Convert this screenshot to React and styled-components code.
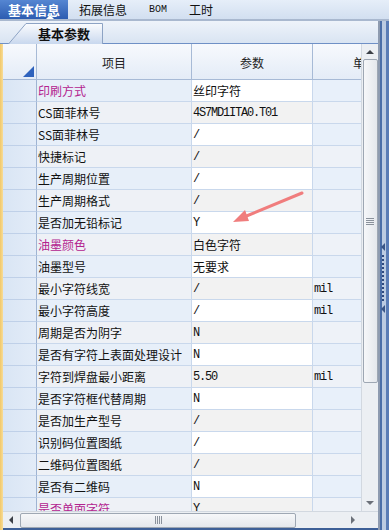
import React from "react";
import styled, { createGlobalStyle } from "styled-components";

const Global = createGlobalStyle`
  html, body { margin: 0; padding: 0; }
  body {
    width: 389px;
    height: 530px;
    overflow: hidden;
    background: #d6e1f0;
    font-family: "Noto Sans CJK SC", "Liberation Sans", sans-serif;
    font-size: 12px;
  }
`;

const Page = styled.div`
  width: 389px;
  height: 530px;
  display: flex;
  flex-direction: column;
`;

const TopTabs = styled.div`
  height: 19px;
  display: flex;
  align-items: center;
  background: linear-gradient(#e6eef9, #d2dff0);
  border-bottom: 2px solid #a9b8cf;
`;

const TopTab = styled.div`
  position: relative;
  height: 19px;
  display: flex;
  align-items: center;
  padding: ${p => (p.active ? "0 8px" : "0 11px")};
  font-weight: ${p => (p.active ? "bold" : "normal")};
  color: ${p => (p.active ? "#fff" : "#111")};
  background: ${p => (p.active ? "linear-gradient(#5586d2, #2c5cb1)" : "transparent")};
  font-family: ${p => (p.latin ? '"Liberation Mono", monospace' : "inherit")};
  font-size: ${p => (p.latin ? "10px" : p.active ? "13px" : "12px")};
  line-height: 19px;

  ${p =>
    p.active &&
    `&::after {
      content: "";
      position: absolute;
      left: 46px;
      bottom: 0;
      border-left: 4px solid transparent;
      border-right: 4px solid transparent;
      border-bottom: 4px solid #fff;
    }`}
`;

const Body = styled.div`
  flex: 1;
  display: flex;
  min-height: 0;
`;

const Left = styled.div`
  flex: 1;
  display: flex;
  flex-direction: column;
  min-width: 0;
`;

const SubTabBar = styled.div`
  height: 22px;
  display: flex;
  align-items: flex-end;
  padding-left: 8px;
  background: linear-gradient(#eef3fa, #d9e4f2);
  border-bottom: 1px solid #6f90c6;
`;

const SubTab = styled.div`
  position: relative;
  width: 95px;
  height: 20px;
  display: flex;
  align-items: center;
  padding-left: 30px;
  box-sizing: border-box;
  font-size: 13px;
  font-weight: bold;
  color: #111;

  svg { position: absolute; left: 0; top: 0; }
  span { position: relative; }
`;

const GridWrap = styled.div`
  flex: 1;
  display: flex;
  min-height: 0;
`;

const LeftStrip = styled.div`
  width: 3px;
  background: linear-gradient(90deg, #f2c86a, #f7dc97);
`;

const GridFrame = styled.div`
  flex: 1;
  display: flex;
  flex-direction: column;
  min-width: 0;
  border-bottom: 2px solid #3d5f97;
`;

const GridMain = styled.div`
  flex: 1;
  display: flex;
  min-height: 0;
`;

const Table = styled.div`
  width: 358px;
  overflow: hidden;
  background: #fff;
`;

const Row = styled.div`
  display: flex;
  height: 22px;
  width: 380px;
`;

const HeaderRow = styled(Row)`
  height: 36px;
  background: linear-gradient(#f7f9fd, #e4ecf7);
  border-bottom: 1px solid #a7bad6;
  box-sizing: border-box;
`;

const Corner = styled.div`
  position: relative;
  width: 34px;
  flex-shrink: 0;
  border-right: 1px solid #a7bad6;
  box-sizing: border-box;

  &::after {
    content: "";
    position: absolute;
    right: 2px;
    bottom: 2px;
    border-left: 11px solid transparent;
    border-bottom: 11px solid #2f63bd;
  }
`;

const HeadCell = styled.div`
  width: ${p => p.w}px;
  flex-shrink: 0;
  display: flex;
  align-items: center;
  justify-content: ${p => (p.start ? "flex-start" : "center")};
  padding-left: ${p => (p.start ? "40px" : "0")};
  border-right: 1px solid #a7bad6;
  box-sizing: border-box;
  color: #222;
  padding-top: 2px;
`;

const Indicator = styled.div`
  width: 34px;
  flex-shrink: 0;
  background: linear-gradient(90deg, #d9e5f4, #e3ecf8);
  border-right: 1px solid #9fb4d3;
  border-bottom: 1px solid #bfd0e8;
  box-sizing: border-box;
`;

const Cell = styled.div`
  width: ${p => p.w}px;
  flex-shrink: 0;
  display: flex;
  align-items: center;
  padding-left: 1px;
  box-sizing: border-box;
  border-right: 1px solid #c9d8ec;
  border-bottom: 1px solid #c9d8ec;
  white-space: nowrap;
  overflow: hidden;
  background: ${p => p.bg};
  color: ${p => (p.accent ? "#b3238f" : "#111")};
  font-family: ${p =>
    p.mono
      ? '"Liberation Mono", "Noto Sans CJK SC", monospace'
      : '"Noto Sans CJK SC", "Liberation Sans", sans-serif'};
  letter-spacing: ${p => (p.mono ? "-1.2px" : "0")};
  font-size: 12px;
  line-height: 14px;
`;

const VScroll = styled.div`
  width: 17px;
  display: flex;
  flex-direction: column;
  align-items: center;
  background: #eceff3;
  border-left: 1px solid #d2d8e0;
  padding-top: 4px;
  box-sizing: border-box;
`;

const Arrow = styled.div`
  width: 0;
  height: 0;
  margin: ${p => p.m};
  border-left: 4px solid transparent;
  border-right: 4px solid transparent;
  ${p => (p.down ? "border-top: 4px solid #6b7079;" : "border-bottom: 4px solid #3c4047;")}
`;

const VThumb = styled.div`
  width: 13px;
  height: 322px;
  margin-top: 5px;
  border: 1px solid #9ea7b3;
  border-radius: 2px;
  background: linear-gradient(90deg, #f6f7f9, #e4e7ec);
  display: flex;
  align-items: center;
  justify-content: center;
  flex-direction: column;
  gap: 1px;

  i { display: block; width: 8px; height: 1px; background: #8a919b; }
`;

const Spacer = styled.div`
  flex: 1;
`;

const HScrollRow = styled.div`
  height: 16px;
  display: flex;
  background: #eceff3;
  border-top: 1px solid #d2d8e0;
`;

const HTrack = styled.div`
  width: 358px;
  display: flex;
  align-items: center;
`;

const SideArrow = styled.div`
  width: 0;
  height: 0;
  margin: ${p => p.m};
  border-top: 4px solid transparent;
  border-bottom: 4px solid transparent;
  ${p => (p.right ? "border-left: 4px solid #6b7079;" : "border-right: 4px solid #3c4047;")}
`;

const HThumb = styled.div`
  width: 274px;
  height: 13px;
  border: 1px solid #9ea7b3;
  border-radius: 2px;
  background: linear-gradient(#f6f7f9, #e4e7ec);
  display: flex;
  align-items: center;
  justify-content: center;
  gap: 1px;

  i { display: block; width: 1px; height: 8px; background: #8a919b; }
`;

const ScrollCorner = styled.div`
  flex: 1;
  background: #eceff3;
`;

const Splitter = styled.div`
  width: 11px;
  display: flex;
  flex-direction: column;
  align-items: center;
  background: linear-gradient(90deg, #8e9bb0 0, #8e9bb0 2px, #4b6ea8 2px, #4b6ea8 4px, #bccbe2 4px, #bccbe2 8px, #5a7cb6 8px);
  padding-top: 222px;
  box-sizing: border-box;
`;

const Grip = styled.div`
  width: 0;
  height: 0;
  margin-left: -1px;
  border-top: 4px solid transparent;
  border-bottom: 4px solid transparent;
  border-right: 4px solid #3b5688;
`;

const Dots = styled.div`
  width: 2px;
  height: 46px;
  margin: 4px 0 4px -1px;
  background: repeating-linear-gradient(#2f4a80 0, #2f4a80 2px, transparent 2px, transparent 4px);
`;

const Annotation = styled.svg`
  position: absolute;
  left: 0;
  top: 0;
  pointer-events: none;
`;

const Stage = styled.div`
  position: relative;
`;

const rows = [
  ["印刷方式", "丝印字符", "", true, false],
  ["CS面菲林号", "4S7MD1ITA0.T01", "", false, true],
  ["SS面菲林号", "/", "", false, true],
  ["快捷标记", "/", "", false, true],
  ["生产周期位置", "/", "", false, true],
  ["生产周期格式", "/", "", false, true],
  ["是否加无铅标记", "Y", "", false, true],
  ["油墨颜色", "白色字符", "", true, false],
  ["油墨型号", "无要求", "", false, false],
  ["最小字符线宽", "/", "mil", false, true],
  ["最小字符高度", "/", "mil", false, true],
  ["周期是否为阴字", "N", "", false, true],
  ["是否有字符上表面处理设计", "N", "", false, true],
  ["字符到焊盘最小距离", "5.50", "mil", false, true],
  ["是否字符框代替周期", "N", "", false, true],
  ["是否加生产型号", "/", "", false, true],
  ["识别码位置图纸", "/", "", false, true],
  ["二维码位置图纸", "/", "", false, true],
  ["是否有二维码", "N", "", false, true],
  ["是否单面字符", "Y", "", true, true],
];

export default function App() {
  return (
    <Stage>
      <Global />
      <Page>
        <TopTabs>
          <TopTab active>基本信息</TopTab>
          <TopTab>拓展信息</TopTab>
          <TopTab latin>BOM</TopTab>
          <TopTab>工时</TopTab>
        </TopTabs>
        <Body>
          <Left>
            <SubTabBar>
              <SubTab>
                <svg width="95" height="21" viewBox="0 0 95 21">
                  <defs>
                    <linearGradient id="tabg" x1="0" y1="0" x2="0" y2="1">
                      <stop offset="0" stopColor="#fbfcfe" />
                      <stop offset="1" stopColor="#c9d8ee" />
                    </linearGradient>
                  </defs>
                  <path d="M0.5 21 L18 0.5 H94.5 V21" fill="url(#tabg)" stroke="#8da3c4" />
                </svg>
                <span>基本参数</span>
              </SubTab>
            </SubTabBar>
            <GridWrap>
              <LeftStrip />
              <GridFrame>
                <GridMain>
                  <Table>
                    <HeaderRow>
                      <Corner />
                      <HeadCell w={155}>项目</HeadCell>
                      <HeadCell w={121}>参数</HeadCell>
                      <HeadCell w={70} start>单位</HeadCell>
                    </HeaderRow>
                    {rows.map(([name, value, unit, accent, mono], i) => {
                      const even = i % 2 === 1;
                      return (
                        <Row key={name}>
                          <Indicator />
                          <Cell w={155} accent={accent} bg={even ? "#eef1f6" : "#e7eff9"}>
                            {name}
                          </Cell>
                          <Cell w={121} mono={mono} bg={even ? "#f2f2f2" : "#ffffff"}>
                            {value}
                          </Cell>
                          <Cell w={70} mono bg={even ? "#eef2f8" : "#e8f0fa"}>
                            {unit}
                          </Cell>
                        </Row>
                      );
                    })}
                  </Table>
                  <VScroll>
                    <Arrow m="2px 0 0" />
                    <VThumb>
                      <i />
                      <i />
                      <i />
                      <i />
                    </VThumb>
                    <Spacer />
                    <Arrow down m="0 0 6px" />
                  </VScroll>
                </GridMain>
                <HScrollRow>
                  <HTrack>
                    <SideArrow m="0 7px 0 6px" />
                    <HThumb>
                      <i />
                      <i />
                      <i />
                      <i />
                    </HThumb>
                    <Spacer />
                    <SideArrow right m="0 6px 0 0" />
                  </HTrack>
                  <ScrollCorner />
                </HScrollRow>
              </GridFrame>
            </GridWrap>
          </Left>
          <Splitter>
            <Grip />
            <Dots />
            <Grip />
          </Splitter>
        </Body>
      </Page>
      <Annotation width="389" height="530">
        <line x1="302" y1="193" x2="244" y2="217" stroke="#f07d7d" strokeWidth="3" strokeLinecap="round" />
        <path d="M233 222 L245 210 L249 221 Z" fill="#f07d7d" />
      </Annotation>
    </Stage>
  );
}
